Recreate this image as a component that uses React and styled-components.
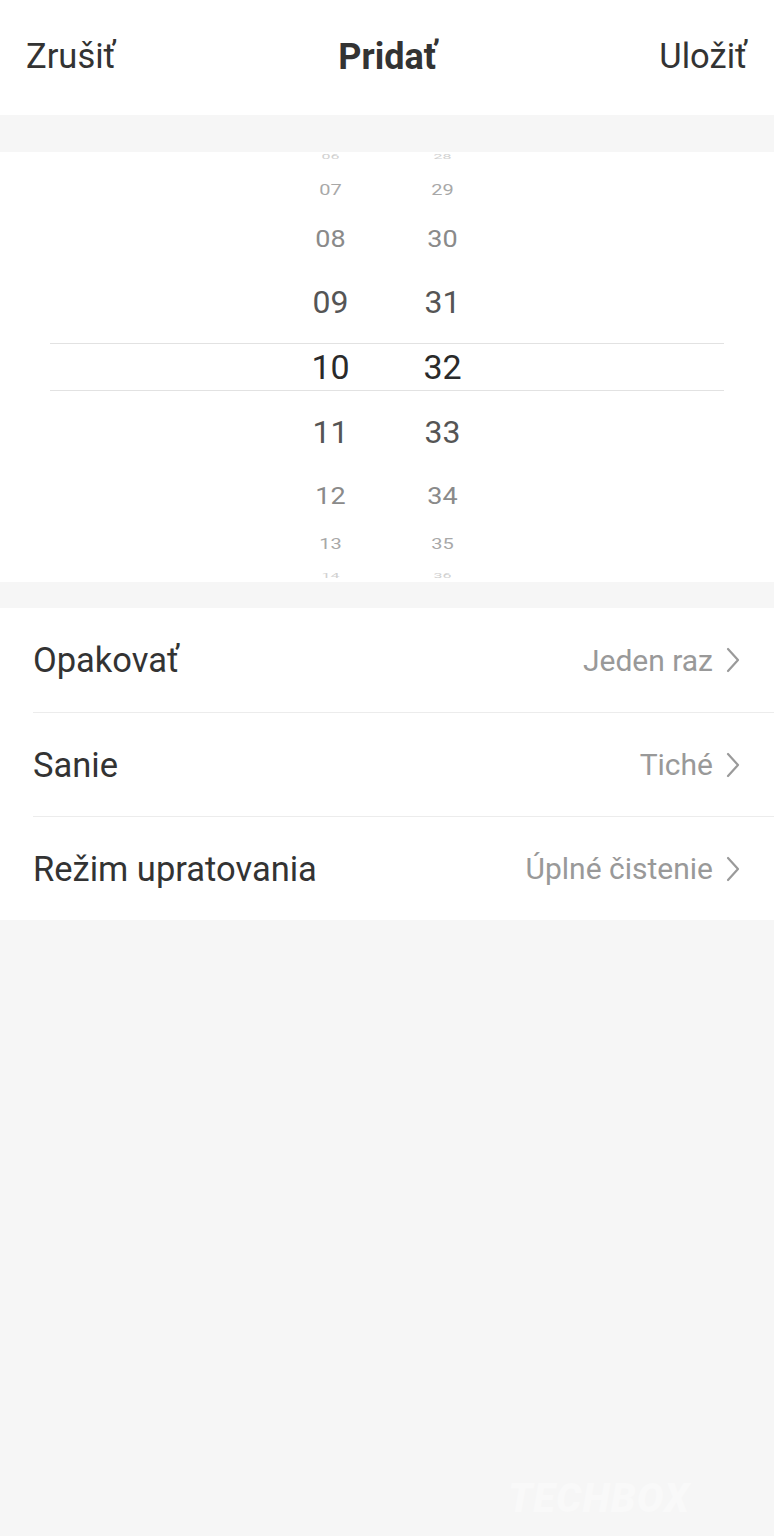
import React from "react"
import styled, { createGlobalStyle } from "styled-components"

const Global = createGlobalStyle`
  html, body {
    margin: 0;
    padding: 0;
    background: #f6f6f6;
    font-family: Roboto, "Noto Sans", "Liberation Sans", sans-serif;
  }
`

// rows of the wheel, top to bottom; the middle one is the selected time
const wheelRows = [
  { h: "06", m: "28", height: 22, size: 16, scale: 0.45, color: "#d0d0d0", shift: -6 },
  { h: "07", m: "29", height: 38, size: 20, scale: 0.72, color: "#a8a8a8", shift: -3 },
  { h: "08", m: "30", height: 58, size: 27, scale: 0.9, color: "#8a8a8a", shift: -2 },
  { h: "09", m: "31", height: 64, size: 32, scale: 1, color: "#555", shift: 0 },
  { h: "10", m: "32", height: 66, size: 34, scale: 1, color: "#2a2a2a", shift: 0 },
  { h: "11", m: "33", height: 64, size: 32, scale: 1, color: "#555", shift: 0 },
  { h: "12", m: "34", height: 58, size: 27, scale: 0.9, color: "#8a8a8a", shift: 3 },
  { h: "13", m: "35", height: 40, size: 20, scale: 0.72, color: "#a8a8a8", shift: 2 },
  { h: "14", m: "36", height: 20, size: 16, scale: 0.45, color: "#d0d0d0", shift: 4 },
]

const settings = [
  { label: "Opakovať", value: "Jeden raz" },
  { label: "Sanie", value: "Tiché" },
  { label: "Režim upratovania", value: "Úplné čistenie" },
]

const Chevron = () => (
  <svg width="16" height="26" viewBox="0 0 16 26" fill="none">
    <path d="M3 2l10 11L3 24" stroke="#9a9a9a" strokeWidth="2.2" strokeLinecap="round" strokeLinejoin="round" />
  </svg>
)

const App = () => {
  return (
    <Page>
      <Global />
      <Header>
        <HeaderButton>Zrušiť</HeaderButton>
        <Title>Pridať</Title>
        <HeaderButton>Uložiť</HeaderButton>
      </Header>

      <Picker>
        <SelectBand />
        <Wheel>
          {wheelRows.map((r) => (
            <WheelRow key={r.h} $height={r.height}>
              <Digit $size={r.size} $scale={r.scale} $color={r.color} $shift={r.shift}>{r.h}</Digit>
              <Digit $size={r.size} $scale={r.scale} $color={r.color} $shift={r.shift}>{r.m}</Digit>
            </WheelRow>
          ))}
        </Wheel>
      </Picker>

      <List>
        {settings.map((s, i) => (
          <Row key={s.label} $first={i === 0}>
            <Label>{s.label}</Label>
            <Value>
              {s.value}
              <Chevron />
            </Value>
          </Row>
        ))}
      </List>

      <Rest>
        <Watermark>TECHBOX</Watermark>
      </Rest>
    </Page>
  )
}
export default App

const Page = styled.div`
  width: 774px;
  min-height: 1536px;
  display: flex;
  flex-direction: column;
  background: #f6f6f6;
`

const Header = styled.div`
  height: 115px;
  background: #fff;
  display: flex;
  align-items: center;
  justify-content: space-between;
  padding: 0 27px 0 26px;
  box-sizing: border-box;
`

const HeaderButton = styled.span`
  font-size: 34.5px;
  color: #333;
  line-height: 1;
  margin-top: -2px;
`

const Title = styled.span`
  font-size: 36px;
  font-weight: 700;
  color: #333;
  line-height: 1;
  margin-top: -2px;
`

const Picker = styled.div`
  margin-top: 37px;
  height: 430px;
  background: #fff;
  position: relative;
  overflow: hidden;
  display: flex;
  justify-content: center;
`

const SelectBand = styled.div`
  position: absolute;
  left: 50px;
  right: 50px;
  top: 191px;
  height: 46px;
  border-top: 1.5px solid #e2e2e2;
  border-bottom: 1.5px solid #e2e2e2;
`

const Wheel = styled.div`
  display: flex;
  flex-direction: column;
  margin-left: -1px;
`

const WheelRow = styled.div`
  height: ${(p) => p.$height}px;
  display: grid;
  grid-template-columns: 112px 112px;
  align-items: center;
`

const Digit = styled.span`
  text-align: center;
  font-size: ${(p) => p.$size}px;
  line-height: 1;
  color: ${(p) => p.$color};
  transform: translateY(${(p) => p.$shift}px) scaleY(${(p) => p.$scale});
`

const List = styled.div`
  margin-top: 26px;
  background: #fff;
`

const Row = styled.div`
  height: 104px;
  margin-left: 33px;
  padding-right: 33px;
  display: flex;
  align-items: center;
  justify-content: space-between;
  border-top: ${(p) => (p.$first ? "none" : "1.5px solid #ececec")};
  box-sizing: border-box;
`

const Label = styled.span`
  font-size: 34.5px;
  color: #333;
`

const Value = styled.span`
  display: flex;
  align-items: center;
  gap: 12px;
  font-size: 30px;
  color: #999;
`

const Rest = styled.div`
  flex: 1;
  display: flex;
  align-items: flex-end;
  justify-content: flex-end;
  padding: 0 84px 14px 0;
`

const Watermark = styled.span`
  font-size: 40px;
  font-weight: 900;
  font-style: italic;
  color: #f9f9f9;
  letter-spacing: 1px;
`
